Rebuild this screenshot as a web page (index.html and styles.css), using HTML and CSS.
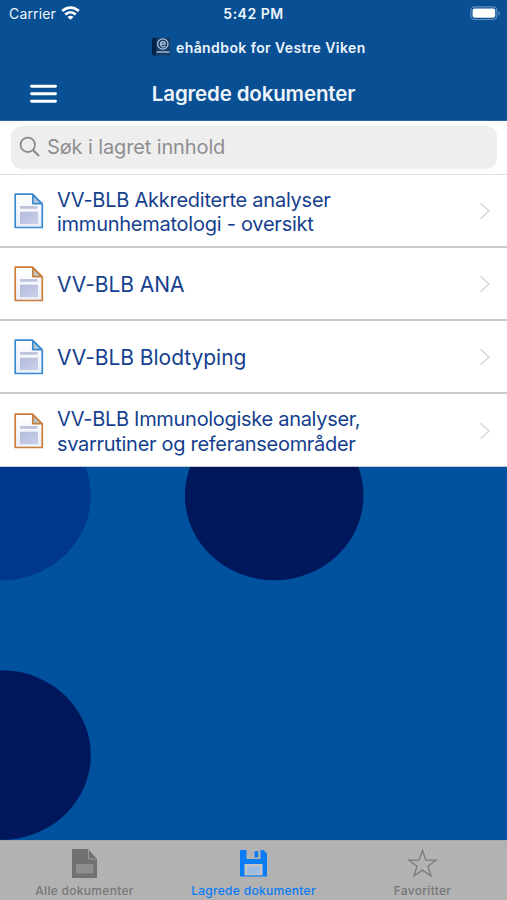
FILE: index.html
```html
<!DOCTYPE html>
<html lang="no">
<head>
<meta charset="utf-8">
<title>Lagrede dokumenter</title>
<link rel="stylesheet" href="styles.css">
</head>
<body>
<svg class="defs" width="0" height="0">
  <defs>
    <linearGradient id="shade" x1="0" y1="0" x2="1" y2="1">
      <stop offset="0" stop-color="#b3bbdc"/><stop offset="1" stop-color="#cbd1ea"/>
    </linearGradient>
    <linearGradient id="paper" x1="0" y1="0" x2="0" y2="1">
      <stop offset="0" stop-color="#fff"/><stop offset="1" stop-color="#e9eef8"/>
    </linearGradient>
    <symbol id="doc" viewBox="0 0 30 36">
      <path d="M1.2 1.2H18.5L28.3 11V34.5H1.2Z" fill="url(#paper)" stroke="currentColor" stroke-width="1.7" stroke-linejoin="round"/>
      <path d="M18.8 1.8V10.6H28Z" fill="#b7c9d6" stroke="currentColor" stroke-width="1.7" stroke-linejoin="round"/>
      <path d="M6 13H23.5V15.8H6Z" fill="#bfc4dc"/>
      <path d="M6 18.7H24V31H6Z" fill="url(#shade)"/>
    </symbol>
    <symbol id="chevron" viewBox="0 0 12 18">
      <path d="M1.5 1.2L10 9L1.5 16.8" fill="none" stroke="#d6d6d8" stroke-width="1.4"/>
    </symbol>
  </defs>
</svg>
<main class="screen">
  <header class="header">
    <div class="status">
      <div class="network">
        <span class="carrier">Carrier</span>
        <svg width="19" height="15" viewBox="0 0 19 15">
          <g fill="none" stroke="#fff" stroke-width="2.8"><path d="M1.2 5C6 .4 13 .4 17.8 5"/><path d="M4.3 8.5C7.4 5.6 11.6 5.6 14.7 8.5"/></g>
          <path d="M9.5 13.8L6.5 10.9C8.2 9.4 10.8 9.4 12.5 10.9Z" fill="#fff"/>
        </svg>
      </div>
      <span class="time">5:42 PM</span>
      <svg class="battery" width="31" height="15" viewBox="0 0 31 15">
        <rect x=".9" y=".9" width="26" height="12.6" rx="3.7" fill="none" stroke="#6690bd" stroke-width="1.1"/>
        <rect x="2.6" y="2.6" width="22.6" height="9.2" rx="2" fill="#fff"/>
        <path d="M28.5 5V9.6C30.4 8.8 30.4 5.8 28.5 5Z" fill="#6690bd"/>
      </svg>
    </div>
    <div class="app">
      <svg width="20" height="20" viewBox="0 0 20 20">
        <path d="M3.5 .8H19V18.5H3.5Q1 18.5 1 16V3.2Q1 .8 3.5 .8Z" fill="#173b67"/>
        <path d="M3.5 .8H5V18.5H3.5Q1 18.5 1 16V3.2Q1 .8 3.5 .8Z" fill="#062347"/>
        <g fill="none" stroke="#b6cbe0" stroke-width="1.2"><circle cx="11.8" cy="7" r="5.2"/><path d="M9.5 7.2H14.2C14.2 3.8 9.5 3.8 9.5 7.2C9.5 10.4 13.2 10.3 14.4 9"/><path d="M5.5 15H18.5" stroke-width="1.7" stroke="#8ea9c2"/></g>
      </svg>
      <span class="app-name">ehåndbok for Vestre Viken</span>
    </div>
    <div class="titlebar">
      <svg class="menu" width="27" height="20" viewBox="0 0 27 20"><path d="M1.5 2.2H25.5M1.5 9.7H25.5M1.5 17.2H25.5" stroke="#fff" stroke-width="2.9" stroke-linecap="round"/></svg>
      <h1 class="title">Lagrede dokumenter</h1>
    </div>
  </header>
  <section class="search">
    <div class="field">
      <svg width="22" height="22" viewBox="0 0 22 22"><g fill="none" stroke="#8b8b8e" stroke-width="1.8"><circle cx="8.8" cy="8.8" r="7.2"/><path d="M14 14L20 20" stroke-width="2.2"/></g></svg>
      <span class="placeholder">Søk i lagret innhold</span>
    </div>
  </section>
  <ul class="list">
    <li class="row"><svg class="doc blue"><use href="#doc"/></svg><span class="name">VV-BLB Akkrediterte analyser<br>immunhematologi - oversikt</span><svg class="chevron"><use href="#chevron"/></svg></li>
    <li class="row"><svg class="doc orange"><use href="#doc"/></svg><span class="name large">VV-BLB ANA</span><svg class="chevron"><use href="#chevron"/></svg></li>
    <li class="row"><svg class="doc blue"><use href="#doc"/></svg><span class="name large">VV-BLB Blodtyping</span><svg class="chevron"><use href="#chevron"/></svg></li>
    <li class="row"><svg class="doc orange"><use href="#doc"/></svg><span class="name tight">VV-BLB Immunologiske analyser,<br>svarrutiner og referanseområder</span><svg class="chevron"><use href="#chevron"/></svg></li>
  </ul>
  <div class="backdrop">
    <svg width="507" height="373" viewBox="0 467 507 373">
      <ellipse cx="1.5" cy="495.5" rx="89.3" ry="84.8" fill="#00388d"/>
      <ellipse cx="274.2" cy="495.5" rx="89.3" ry="84.8" fill="#00185b"/>
      <ellipse cx="1.5" cy="755" rx="89.3" ry="84.8" fill="#00185b"/>
    </svg>
  </div>
  <nav class="tabs">
    <div class="tab">
      <svg width="27" height="31" viewBox="0 0 27 31">
        <path d="M1 1H17L26 11V30H1Z" fill="#717171"/><path d="M17.5 2V11H25.5" fill="#717171" stroke="#999" stroke-width="1"/><rect x="5" y="16" width="17.5" height="9.5" fill="#8e8e8e"/>
      </svg>
      <span>Alle dokumenter</span>
    </div>
    <div class="tab active">
      <svg width="29" height="31" viewBox="0 0 29 31">
        <path d="M1 2H24.5L28 5.5V28.5H1Z" fill="#0a7cf5"/>
        <path d="M7.5 2H21.5V11H7.5Z" fill="#b3b3b3"/><path d="M15.5 3.2H19.2V9.5H15.5Z" fill="#0a7cf5"/>
        <path d="M5.5 16H23.5V27.3H5.5Z" fill="#c4c4c4"/><path d="M8 18.5H21V26H8Z" fill="#9dbce0"/>
      </svg>
      <span>Lagrede dokumenter</span>
    </div>
    <div class="tab">
      <svg width="31" height="31" viewBox="0 0 31 31"><path d="M15.5 2.5L18.9 12.1H29.2L21 18.2L24 28L15.5 22.1L7 28L10 18.2L1.8 12.1H12.1Z" fill="none" stroke="#7b7b7b" stroke-width="1.3"/></svg>
      <span>Favoritter</span>
    </div>
  </nav>
</main>
</body>
</html>
```
FILE: styles.css
```css
* { box-sizing: border-box; }
body { margin: 0; font-family: Inter, "Liberation Sans", sans-serif; }
.defs { position: absolute; }
svg { display: block; flex: none; }
.screen { width: 507px; height: 900px; display: flex; flex-direction: column; overflow: hidden; background: #00519e; }
.header { height: 121px; flex: none; background: #084f94; border-bottom: 1px solid #2b659f; color: #eef4fb; }
.status { height: 27px; display: grid; grid-template-columns: 1fr auto 1fr; align-items: center; padding: 0 6px 0 9px; }
.network { display: flex; align-items: center; gap: 5px; }
.carrier { font-size: 14px; letter-spacing: .15px; }
.time { font-size: 14px; font-weight: 600; letter-spacing: .5px; margin-left: -3px; }
.battery { justify-self: end; }
.app { height: 40px; display: flex; align-items: center; gap: 5px; padding-left: 151px; }
.app-name { font-size: 14px; font-weight: 600; letter-spacing: .41px; }
.titlebar { height: 53px; display: grid; grid-template-columns: 58px 1fr 58px; align-items: center; }
.menu { margin-left: 30px; }
.title { margin: 0; font-size: 20.5px; font-weight: 600; letter-spacing: -.15px; text-align: center; }
.search { height: 54px; flex: none; padding: 5px 10px 6px 11px; background: #fff; border-bottom: 1px solid #e1e1e2; }
.field { height: 43px; border-radius: 11px; background: #eee; display: flex; align-items: center; gap: 6px; padding: 0 0 1px 8px; }
.placeholder { color: #8e8e91; font-size: 20px; letter-spacing: -.12px; }
.list { margin: 0; padding: 0; list-style: none; flex: none; height: 292px; display: grid; grid-template-rows: 73px 73px 73px 73px; background: #fff; }
.row { display: flex; align-items: center; padding: 1px 16px 0 14px; border-bottom: 2px solid #c9c9c9; }
.row:last-child { border-bottom-width: 1px; }
.doc { width: 30px; height: 36px; margin-right: 13px; }
.blue { color: #3b8ad0; }
.orange { color: #cb7e3b; }
.name { flex: 1; padding-top: 2px; color: #153f8e; font-size: 20px; line-height: 24.4px; letter-spacing: -.25px; white-space: nowrap; }
.tight { letter-spacing: -.3px; }
.large { font-size: 21px; letter-spacing: -.04px; }
.chevron { width: 12px; height: 18px; }
.backdrop { height: 373px; flex: none; }
.tabs { height: 60px; flex: none; display: grid; grid-template-columns: repeat(3, 1fr); background: #b2b2b2; border-top: 1px solid #a2a9ad; color: #777; }
.tab { display: flex; flex-direction: column; align-items: center; padding-top: 7px; gap: 4px; font-size: 12px; line-height: 16px; font-weight: 500; letter-spacing: .3px; }
.active { color: #0a7cf5; }
```
